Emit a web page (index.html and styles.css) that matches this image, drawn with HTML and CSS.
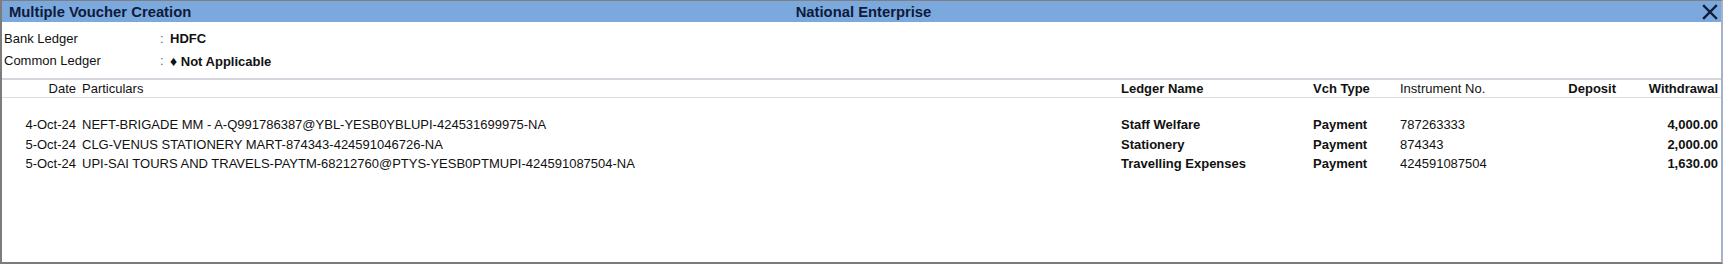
FILE: index.html
```html
<!DOCTYPE html>
<html>
<head>
<meta charset="utf-8">
<title>Multiple Voucher Creation</title>
<link rel="stylesheet" href="styles.css">
</head>
<body>
<div class="window">
  <div class="titlebar">
    <div class="title-left">Multiple Voucher Creation</div>
    <div class="title-center">National Enterprise</div>
    <div class="title-right">
      <svg class="close" width="16" height="16" viewBox="0 0 16 16"><path d="M2 2 L14 14 M14 2 L2 14" stroke="#101c38" stroke-width="2.4" stroke-linecap="square" fill="none"/></svg>
    </div>
  </div>
  <div class="info">
    <div class="info-row">
      <span class="label">Bank Ledger</span>
      <span class="colon">:</span>
      <span class="value">HDFC</span>
    </div>
    <div class="info-row">
      <span class="label">Common Ledger</span>
      <span class="colon">:</span>
      <span class="value"><span class="diamond">&#9830;</span> Not Applicable</span>
    </div>
  </div>
  <div class="grid colhead">
    <div class="c-date">Date</div>
    <div class="c-part">Particulars</div>
    <div class="c-ledger b">Ledger Name</div>
    <div class="c-vch b">Vch Type</div>
    <div class="c-inst">Instrument No.</div>
    <div class="c-dep b">Deposit</div>
    <div class="c-wd b">Withdrawal</div>
  </div>
  <div class="rows">
    <div class="grid row">
      <div class="c-date">4-Oct-24</div>
      <div class="c-part">NEFT-BRIGADE MM - A-Q991786387@YBL-YESB0YBLUPI-424531699975-NA</div>
      <div class="c-ledger b">Staff Welfare</div>
      <div class="c-vch b">Payment</div>
      <div class="c-inst">787263333</div>
      <div class="c-dep b"></div>
      <div class="c-wd b">4,000.00</div>
    </div>
    <div class="grid row">
      <div class="c-date">5-Oct-24</div>
      <div class="c-part">CLG-VENUS STATIONERY MART-874343-424591046726-NA</div>
      <div class="c-ledger b">Stationery</div>
      <div class="c-vch b">Payment</div>
      <div class="c-inst">874343</div>
      <div class="c-dep b"></div>
      <div class="c-wd b">2,000.00</div>
    </div>
    <div class="grid row">
      <div class="c-date">5-Oct-24</div>
      <div class="c-part">UPI-SAI TOURS AND TRAVELS-PAYTM-68212760@PTYS-YESB0PTMUPI-424591087504-NA</div>
      <div class="c-ledger b">Travelling Expenses</div>
      <div class="c-vch b">Payment</div>
      <div class="c-inst">424591087504</div>
      <div class="c-dep b"></div>
      <div class="c-wd b">1,630.00</div>
    </div>
  </div>
</div>
</body>
</html>
```
FILE: styles.css
```css
html, body {
  margin: 0;
  padding: 0;
  background: #ffffff;
}
body {
  font-family: "Liberation Sans", Arial, sans-serif;
  font-size: 13px;
  color: #111111;
}
.window {
  box-sizing: border-box;
  width: 1723px;
  height: 264px;
  border-top: 1px solid #808080;
  border-left: 2px solid #7c7c7c;
  border-bottom: 2px solid #7c7c7c;
  border-right: 2px solid #a4b2cc;
  display: flex;
  flex-direction: column;
}
.titlebar {
  height: 21px;
  background: #7ba9dd;
  display: grid;
  grid-template-columns: 1fr auto 1fr;
  align-items: center;
  padding: 0 3px 0 7px;
  color: #0d1b3d;
  font-weight: bold;
  font-size: 14.8px;
}
.title-center {
  text-align: center;
}
.title-right {
  display: flex;
  justify-content: flex-end;
  align-items: center;
}
.close {
  display: block;
}
.info {
  padding: 6px 0 6px 2px;
}
.info-row {
  display: grid;
  grid-template-columns: 156px 10px auto;
  height: 22px;
  line-height: 22px;
}
.colon {
  color: #666666;
}
.value {
  font-weight: bold;
}
.diamond {
  font-size: 14px;
}
.grid {
  display: grid;
  grid-template-columns: 74px 1045px 192px 87px 100px 116px 102px;
}
.colhead {
  border-top: 2px solid #d4d4dc;
  border-bottom: 1px solid #dedee2;
  height: 17px;
  line-height: 17px;
}
.rows {
  padding-top: 17px;
}
.row {
  height: 19.5px;
  line-height: 19.5px;
}
.b {
  font-weight: bold;
}
.c-date {
  text-align: right;
  white-space: nowrap;
}
.c-part {
  padding-left: 6px;
  white-space: nowrap;
}
.c-dep, .c-wd {
  text-align: right;
}
```
